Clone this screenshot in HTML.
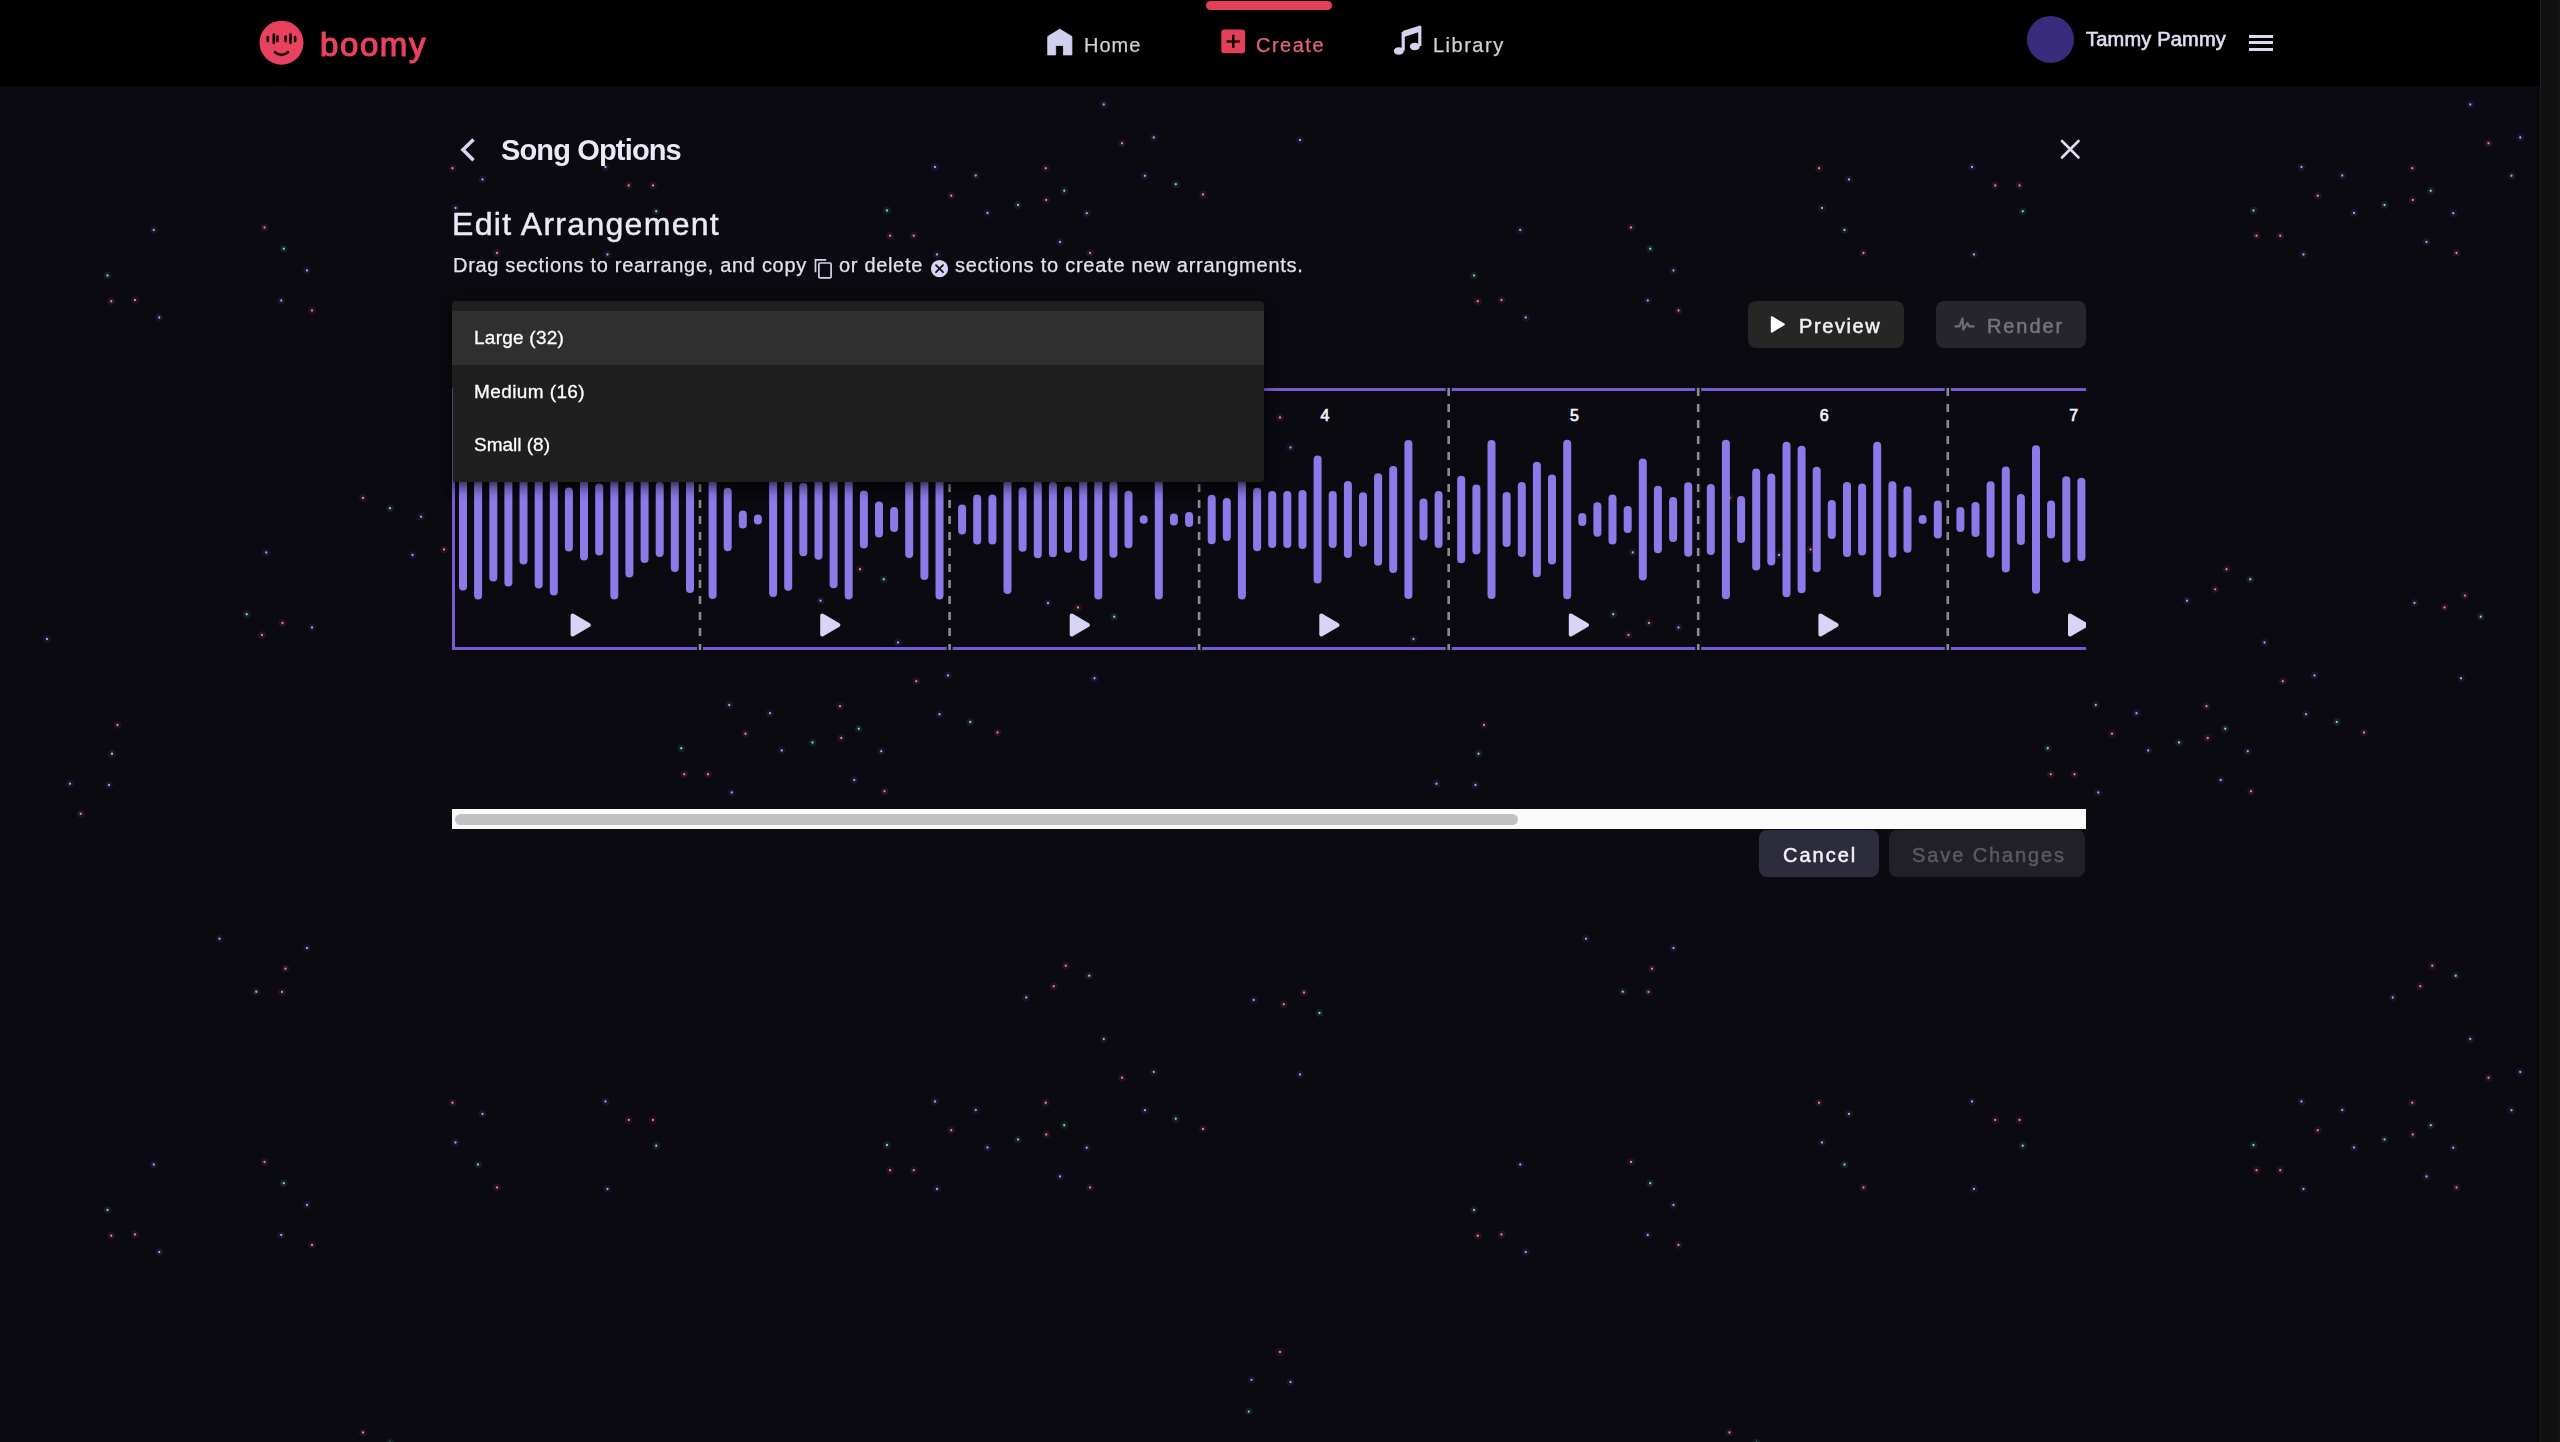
<!DOCTYPE html>
<html><head><meta charset="utf-8">
<style>
html,body{margin:0;padding:0;}
body{width:2560px;height:1442px;overflow:hidden;background:#0b0a11;position:relative;font-family:"Liberation Sans",sans-serif;}
.abs{position:absolute;}
#hdr{left:0;top:0;width:2540px;height:86px;background:#000;}
#sb{left:2540px;top:0;width:20px;height:1442px;background:#111111;border-left:1px solid #1d1d1f;border-right:2px solid #161616;box-sizing:border-box;}
#sbl{left:2537px;top:86px;width:1px;height:1356px;background:#060609;}
.txt{white-space:nowrap;line-height:1;will-change:transform;}
</style></head>
<body>
<svg class="abs" style="left:0;top:0;" width="2538" height="1442" viewBox="0 0 2538 1442">
<g fill="#c2365a" opacity="0.16"><circle cx="264.50" cy="227.50" r="3.8"/><circle cx="264.50" cy="1162.00" r="3.8"/><circle cx="1631.00" cy="227.50" r="3.8"/><circle cx="1631.00" cy="1162.00" r="3.8"/><circle cx="111.25" cy="301.25" r="3.8"/><circle cx="111.25" cy="1235.75" r="3.8"/><circle cx="1477.75" cy="301.25" r="3.8"/><circle cx="1477.75" cy="1235.75" r="3.8"/><circle cx="135.00" cy="300.00" r="3.8"/><circle cx="135.00" cy="1234.50" r="3.8"/><circle cx="1501.50" cy="300.00" r="3.8"/><circle cx="1501.50" cy="1234.50" r="3.8"/><circle cx="312.00" cy="310.50" r="3.8"/><circle cx="312.00" cy="1245.00" r="3.8"/><circle cx="1678.50" cy="310.50" r="3.8"/><circle cx="1678.50" cy="1245.00" r="3.8"/><circle cx="452.50" cy="168.25" r="3.8"/><circle cx="452.50" cy="1102.75" r="3.8"/><circle cx="1819.00" cy="168.25" r="3.8"/><circle cx="1819.00" cy="1102.75" r="3.8"/><circle cx="628.75" cy="185.50" r="3.8"/><circle cx="628.75" cy="1120.00" r="3.8"/><circle cx="1995.25" cy="185.50" r="3.8"/><circle cx="1995.25" cy="1120.00" r="3.8"/><circle cx="497.00" cy="253.00" r="3.8"/><circle cx="497.00" cy="1187.50" r="3.8"/><circle cx="1863.50" cy="253.00" r="3.8"/><circle cx="1863.50" cy="1187.50" r="3.8"/><circle cx="653.00" cy="185.50" r="3.8"/><circle cx="653.00" cy="1120.00" r="3.8"/><circle cx="2019.50" cy="185.50" r="3.8"/><circle cx="2019.50" cy="1120.00" r="3.8"/><circle cx="1122.00" cy="143.25" r="3.8"/><circle cx="1122.00" cy="1077.75" r="3.8"/><circle cx="2488.50" cy="143.25" r="3.8"/><circle cx="2488.50" cy="1077.75" r="3.8"/><circle cx="1045.75" cy="168.25" r="3.8"/><circle cx="1045.75" cy="1102.75" r="3.8"/><circle cx="2412.25" cy="168.25" r="3.8"/><circle cx="2412.25" cy="1102.75" r="3.8"/><circle cx="1203.00" cy="194.50" r="3.8"/><circle cx="1203.00" cy="1129.00" r="3.8"/><circle cx="951.25" cy="195.75" r="3.8"/><circle cx="951.25" cy="1130.25" r="3.8"/><circle cx="2317.75" cy="195.75" r="3.8"/><circle cx="2317.75" cy="1130.25" r="3.8"/><circle cx="1046.25" cy="200.00" r="3.8"/><circle cx="1046.25" cy="1134.50" r="3.8"/><circle cx="2412.75" cy="200.00" r="3.8"/><circle cx="2412.75" cy="1134.50" r="3.8"/><circle cx="890.00" cy="235.75" r="3.8"/><circle cx="890.00" cy="1170.25" r="3.8"/><circle cx="2256.50" cy="235.75" r="3.8"/><circle cx="2256.50" cy="1170.25" r="3.8"/><circle cx="913.75" cy="235.75" r="3.8"/><circle cx="913.75" cy="1170.25" r="3.8"/><circle cx="2280.25" cy="235.75" r="3.8"/><circle cx="2280.25" cy="1170.25" r="3.8"/><circle cx="1090.00" cy="253.00" r="3.8"/><circle cx="1090.00" cy="1187.50" r="3.8"/><circle cx="2456.50" cy="253.00" r="3.8"/><circle cx="2456.50" cy="1187.50" r="3.8"/><circle cx="1280.00" cy="417.50" r="3.8"/><circle cx="1280.00" cy="1352.00" r="3.8"/><circle cx="363.00" cy="498.00" r="3.8"/><circle cx="363.00" cy="1432.50" r="3.8"/><circle cx="1729.50" cy="498.00" r="3.8"/><circle cx="1729.50" cy="1432.50" r="3.8"/><circle cx="444.00" cy="549.50" r="3.8"/><circle cx="1810.50" cy="549.50" r="3.8"/><circle cx="282.50" cy="623.00" r="3.8"/><circle cx="1649.00" cy="623.00" r="3.8"/><circle cx="262.00" cy="635.00" r="3.8"/><circle cx="1628.50" cy="635.00" r="3.8"/><circle cx="117.50" cy="725.00" r="3.8"/><circle cx="1484.00" cy="725.00" r="3.8"/><circle cx="860.00" cy="569.25" r="3.8"/><circle cx="2226.50" cy="569.25" r="3.8"/><circle cx="1078.00" cy="607.50" r="3.8"/><circle cx="2444.50" cy="607.50" r="3.8"/><circle cx="916.25" cy="681.25" r="3.8"/><circle cx="2282.75" cy="681.25" r="3.8"/><circle cx="840.00" cy="706.25" r="3.8"/><circle cx="2206.50" cy="706.25" r="3.8"/><circle cx="997.50" cy="732.50" r="3.8"/><circle cx="2364.00" cy="732.50" r="3.8"/><circle cx="745.50" cy="733.75" r="3.8"/><circle cx="2112.00" cy="733.75" r="3.8"/><circle cx="841.25" cy="738.00" r="3.8"/><circle cx="2207.75" cy="738.00" r="3.8"/><circle cx="684.25" cy="774.25" r="3.8"/><circle cx="2050.75" cy="774.25" r="3.8"/><circle cx="708.00" cy="774.25" r="3.8"/><circle cx="2074.50" cy="774.25" r="3.8"/><circle cx="884.50" cy="791.25" r="3.8"/><circle cx="2251.00" cy="791.25" r="3.8"/><circle cx="80.75" cy="813.75" r="3.8"/><circle cx="1447.25" cy="813.75" r="3.8"/><circle cx="285.50" cy="968.75" r="3.8"/><circle cx="1652.00" cy="968.75" r="3.8"/><circle cx="282.00" cy="992.00" r="3.8"/><circle cx="1648.50" cy="992.00" r="3.8"/><circle cx="1065.75" cy="965.75" r="3.8"/><circle cx="2432.25" cy="965.75" r="3.8"/><circle cx="1053.75" cy="986.25" r="3.8"/><circle cx="2420.25" cy="986.25" r="3.8"/><circle cx="1304.00" cy="992.50" r="3.8"/><circle cx="1283.75" cy="1004.25" r="3.8"/><circle cx="848.70" cy="589.30" r="3.8"/><circle cx="2215.20" cy="589.30" r="3.8"/><circle cx="1098.50" cy="595.60" r="3.8"/><circle cx="2465.00" cy="595.60" r="3.8"/></g>
<g fill="#c8909e"><circle cx="264.50" cy="227.50" r="1.15"/><circle cx="264.50" cy="1162.00" r="1.15"/><circle cx="1631.00" cy="227.50" r="1.15"/><circle cx="1631.00" cy="1162.00" r="1.15"/><circle cx="111.25" cy="301.25" r="1.15"/><circle cx="111.25" cy="1235.75" r="1.15"/><circle cx="1477.75" cy="301.25" r="1.15"/><circle cx="1477.75" cy="1235.75" r="1.15"/><circle cx="135.00" cy="300.00" r="1.15"/><circle cx="135.00" cy="1234.50" r="1.15"/><circle cx="1501.50" cy="300.00" r="1.15"/><circle cx="1501.50" cy="1234.50" r="1.15"/><circle cx="312.00" cy="310.50" r="1.15"/><circle cx="312.00" cy="1245.00" r="1.15"/><circle cx="1678.50" cy="310.50" r="1.15"/><circle cx="1678.50" cy="1245.00" r="1.15"/><circle cx="452.50" cy="168.25" r="1.15"/><circle cx="452.50" cy="1102.75" r="1.15"/><circle cx="1819.00" cy="168.25" r="1.15"/><circle cx="1819.00" cy="1102.75" r="1.15"/><circle cx="628.75" cy="185.50" r="1.15"/><circle cx="628.75" cy="1120.00" r="1.15"/><circle cx="1995.25" cy="185.50" r="1.15"/><circle cx="1995.25" cy="1120.00" r="1.15"/><circle cx="497.00" cy="253.00" r="1.15"/><circle cx="497.00" cy="1187.50" r="1.15"/><circle cx="1863.50" cy="253.00" r="1.15"/><circle cx="1863.50" cy="1187.50" r="1.15"/><circle cx="653.00" cy="185.50" r="1.15"/><circle cx="653.00" cy="1120.00" r="1.15"/><circle cx="2019.50" cy="185.50" r="1.15"/><circle cx="2019.50" cy="1120.00" r="1.15"/><circle cx="1122.00" cy="143.25" r="1.15"/><circle cx="1122.00" cy="1077.75" r="1.15"/><circle cx="2488.50" cy="143.25" r="1.15"/><circle cx="2488.50" cy="1077.75" r="1.15"/><circle cx="1045.75" cy="168.25" r="1.15"/><circle cx="1045.75" cy="1102.75" r="1.15"/><circle cx="2412.25" cy="168.25" r="1.15"/><circle cx="2412.25" cy="1102.75" r="1.15"/><circle cx="1203.00" cy="194.50" r="1.15"/><circle cx="1203.00" cy="1129.00" r="1.15"/><circle cx="951.25" cy="195.75" r="1.15"/><circle cx="951.25" cy="1130.25" r="1.15"/><circle cx="2317.75" cy="195.75" r="1.15"/><circle cx="2317.75" cy="1130.25" r="1.15"/><circle cx="1046.25" cy="200.00" r="1.15"/><circle cx="1046.25" cy="1134.50" r="1.15"/><circle cx="2412.75" cy="200.00" r="1.15"/><circle cx="2412.75" cy="1134.50" r="1.15"/><circle cx="890.00" cy="235.75" r="1.15"/><circle cx="890.00" cy="1170.25" r="1.15"/><circle cx="2256.50" cy="235.75" r="1.15"/><circle cx="2256.50" cy="1170.25" r="1.15"/><circle cx="913.75" cy="235.75" r="1.15"/><circle cx="913.75" cy="1170.25" r="1.15"/><circle cx="2280.25" cy="235.75" r="1.15"/><circle cx="2280.25" cy="1170.25" r="1.15"/><circle cx="1090.00" cy="253.00" r="1.15"/><circle cx="1090.00" cy="1187.50" r="1.15"/><circle cx="2456.50" cy="253.00" r="1.15"/><circle cx="2456.50" cy="1187.50" r="1.15"/><circle cx="1280.00" cy="417.50" r="1.15"/><circle cx="1280.00" cy="1352.00" r="1.15"/><circle cx="363.00" cy="498.00" r="1.15"/><circle cx="363.00" cy="1432.50" r="1.15"/><circle cx="1729.50" cy="498.00" r="1.15"/><circle cx="1729.50" cy="1432.50" r="1.15"/><circle cx="444.00" cy="549.50" r="1.15"/><circle cx="1810.50" cy="549.50" r="1.15"/><circle cx="282.50" cy="623.00" r="1.15"/><circle cx="1649.00" cy="623.00" r="1.15"/><circle cx="262.00" cy="635.00" r="1.15"/><circle cx="1628.50" cy="635.00" r="1.15"/><circle cx="117.50" cy="725.00" r="1.15"/><circle cx="1484.00" cy="725.00" r="1.15"/><circle cx="860.00" cy="569.25" r="1.15"/><circle cx="2226.50" cy="569.25" r="1.15"/><circle cx="1078.00" cy="607.50" r="1.15"/><circle cx="2444.50" cy="607.50" r="1.15"/><circle cx="916.25" cy="681.25" r="1.15"/><circle cx="2282.75" cy="681.25" r="1.15"/><circle cx="840.00" cy="706.25" r="1.15"/><circle cx="2206.50" cy="706.25" r="1.15"/><circle cx="997.50" cy="732.50" r="1.15"/><circle cx="2364.00" cy="732.50" r="1.15"/><circle cx="745.50" cy="733.75" r="1.15"/><circle cx="2112.00" cy="733.75" r="1.15"/><circle cx="841.25" cy="738.00" r="1.15"/><circle cx="2207.75" cy="738.00" r="1.15"/><circle cx="684.25" cy="774.25" r="1.15"/><circle cx="2050.75" cy="774.25" r="1.15"/><circle cx="708.00" cy="774.25" r="1.15"/><circle cx="2074.50" cy="774.25" r="1.15"/><circle cx="884.50" cy="791.25" r="1.15"/><circle cx="2251.00" cy="791.25" r="1.15"/><circle cx="80.75" cy="813.75" r="1.15"/><circle cx="1447.25" cy="813.75" r="1.15"/><circle cx="285.50" cy="968.75" r="1.15"/><circle cx="1652.00" cy="968.75" r="1.15"/><circle cx="282.00" cy="992.00" r="1.15"/><circle cx="1648.50" cy="992.00" r="1.15"/><circle cx="1065.75" cy="965.75" r="1.15"/><circle cx="2432.25" cy="965.75" r="1.15"/><circle cx="1053.75" cy="986.25" r="1.15"/><circle cx="2420.25" cy="986.25" r="1.15"/><circle cx="1304.00" cy="992.50" r="1.15"/><circle cx="1283.75" cy="1004.25" r="1.15"/><circle cx="848.70" cy="589.30" r="1.15"/><circle cx="2215.20" cy="589.30" r="1.15"/><circle cx="1098.50" cy="595.60" r="1.15"/><circle cx="2465.00" cy="595.60" r="1.15"/></g>
<g fill="#2f9a72" opacity="0.16"><circle cx="283.75" cy="248.75" r="3.8"/><circle cx="283.75" cy="1183.25" r="3.8"/><circle cx="1650.25" cy="248.75" r="3.8"/><circle cx="1650.25" cy="1183.25" r="3.8"/><circle cx="107.50" cy="275.50" r="3.8"/><circle cx="107.50" cy="1210.00" r="3.8"/><circle cx="1474.00" cy="275.50" r="3.8"/><circle cx="1474.00" cy="1210.00" r="3.8"/><circle cx="478.00" cy="230.00" r="3.8"/><circle cx="478.00" cy="1164.50" r="3.8"/><circle cx="1844.50" cy="230.00" r="3.8"/><circle cx="1844.50" cy="1164.50" r="3.8"/><circle cx="656.25" cy="211.25" r="3.8"/><circle cx="656.25" cy="1145.75" r="3.8"/><circle cx="2022.75" cy="211.25" r="3.8"/><circle cx="2022.75" cy="1145.75" r="3.8"/><circle cx="1175.75" cy="184.25" r="3.8"/><circle cx="1175.75" cy="1118.75" r="3.8"/><circle cx="2542.25" cy="184.25" r="3.8"/><circle cx="2542.25" cy="1118.75" r="3.8"/><circle cx="1064.25" cy="190.75" r="3.8"/><circle cx="1064.25" cy="1125.25" r="3.8"/><circle cx="2430.75" cy="190.75" r="3.8"/><circle cx="2430.75" cy="1125.25" r="3.8"/><circle cx="1018.00" cy="205.00" r="3.8"/><circle cx="1018.00" cy="1139.50" r="3.8"/><circle cx="2384.50" cy="205.00" r="3.8"/><circle cx="2384.50" cy="1139.50" r="3.8"/><circle cx="887.00" cy="210.50" r="3.8"/><circle cx="887.00" cy="1145.00" r="3.8"/><circle cx="2253.50" cy="210.50" r="3.8"/><circle cx="2253.50" cy="1145.00" r="3.8"/><circle cx="390.00" cy="508.25" r="3.8"/><circle cx="390.00" cy="1442.75" r="3.8"/><circle cx="1756.50" cy="508.25" r="3.8"/><circle cx="1756.50" cy="1442.75" r="3.8"/><circle cx="246.75" cy="614.25" r="3.8"/><circle cx="1613.25" cy="614.25" r="3.8"/><circle cx="112.00" cy="753.75" r="3.8"/><circle cx="1478.50" cy="753.75" r="3.8"/><circle cx="883.75" cy="579.25" r="3.8"/><circle cx="2250.25" cy="579.25" r="3.8"/><circle cx="1114.25" cy="616.75" r="3.8"/><circle cx="2480.75" cy="616.75" r="3.8"/><circle cx="970.25" cy="722.00" r="3.8"/><circle cx="2336.75" cy="722.00" r="3.8"/><circle cx="858.75" cy="728.75" r="3.8"/><circle cx="2225.25" cy="728.75" r="3.8"/><circle cx="812.50" cy="742.50" r="3.8"/><circle cx="2179.00" cy="742.50" r="3.8"/><circle cx="681.25" cy="748.25" r="3.8"/><circle cx="2047.75" cy="748.25" r="3.8"/><circle cx="256.25" cy="991.75" r="3.8"/><circle cx="1622.75" cy="991.75" r="3.8"/><circle cx="1089.25" cy="975.75" r="3.8"/><circle cx="2455.75" cy="975.75" r="3.8"/><circle cx="1319.50" cy="1013.00" r="3.8"/><circle cx="1248.80" cy="477.10" r="3.8"/><circle cx="1248.80" cy="1411.60" r="3.8"/></g>
<g fill="#a3c4b4"><circle cx="283.75" cy="248.75" r="1.15"/><circle cx="283.75" cy="1183.25" r="1.15"/><circle cx="1650.25" cy="248.75" r="1.15"/><circle cx="1650.25" cy="1183.25" r="1.15"/><circle cx="107.50" cy="275.50" r="1.15"/><circle cx="107.50" cy="1210.00" r="1.15"/><circle cx="1474.00" cy="275.50" r="1.15"/><circle cx="1474.00" cy="1210.00" r="1.15"/><circle cx="478.00" cy="230.00" r="1.15"/><circle cx="478.00" cy="1164.50" r="1.15"/><circle cx="1844.50" cy="230.00" r="1.15"/><circle cx="1844.50" cy="1164.50" r="1.15"/><circle cx="656.25" cy="211.25" r="1.15"/><circle cx="656.25" cy="1145.75" r="1.15"/><circle cx="2022.75" cy="211.25" r="1.15"/><circle cx="2022.75" cy="1145.75" r="1.15"/><circle cx="1175.75" cy="184.25" r="1.15"/><circle cx="1175.75" cy="1118.75" r="1.15"/><circle cx="2542.25" cy="184.25" r="1.15"/><circle cx="2542.25" cy="1118.75" r="1.15"/><circle cx="1064.25" cy="190.75" r="1.15"/><circle cx="1064.25" cy="1125.25" r="1.15"/><circle cx="2430.75" cy="190.75" r="1.15"/><circle cx="2430.75" cy="1125.25" r="1.15"/><circle cx="1018.00" cy="205.00" r="1.15"/><circle cx="1018.00" cy="1139.50" r="1.15"/><circle cx="2384.50" cy="205.00" r="1.15"/><circle cx="2384.50" cy="1139.50" r="1.15"/><circle cx="887.00" cy="210.50" r="1.15"/><circle cx="887.00" cy="1145.00" r="1.15"/><circle cx="2253.50" cy="210.50" r="1.15"/><circle cx="2253.50" cy="1145.00" r="1.15"/><circle cx="390.00" cy="508.25" r="1.15"/><circle cx="390.00" cy="1442.75" r="1.15"/><circle cx="1756.50" cy="508.25" r="1.15"/><circle cx="1756.50" cy="1442.75" r="1.15"/><circle cx="246.75" cy="614.25" r="1.15"/><circle cx="1613.25" cy="614.25" r="1.15"/><circle cx="112.00" cy="753.75" r="1.15"/><circle cx="1478.50" cy="753.75" r="1.15"/><circle cx="883.75" cy="579.25" r="1.15"/><circle cx="2250.25" cy="579.25" r="1.15"/><circle cx="1114.25" cy="616.75" r="1.15"/><circle cx="2480.75" cy="616.75" r="1.15"/><circle cx="970.25" cy="722.00" r="1.15"/><circle cx="2336.75" cy="722.00" r="1.15"/><circle cx="858.75" cy="728.75" r="1.15"/><circle cx="2225.25" cy="728.75" r="1.15"/><circle cx="812.50" cy="742.50" r="1.15"/><circle cx="2179.00" cy="742.50" r="1.15"/><circle cx="681.25" cy="748.25" r="1.15"/><circle cx="2047.75" cy="748.25" r="1.15"/><circle cx="256.25" cy="991.75" r="1.15"/><circle cx="1622.75" cy="991.75" r="1.15"/><circle cx="1089.25" cy="975.75" r="1.15"/><circle cx="2455.75" cy="975.75" r="1.15"/><circle cx="1319.50" cy="1013.00" r="1.15"/><circle cx="1248.80" cy="477.10" r="1.15"/><circle cx="1248.80" cy="1411.60" r="1.15"/></g>
<g fill="#5550c0" opacity="0.16"><circle cx="153.75" cy="230.00" r="3.8"/><circle cx="153.75" cy="1164.50" r="3.8"/><circle cx="1520.25" cy="230.00" r="3.8"/><circle cx="1520.25" cy="1164.50" r="3.8"/><circle cx="307.00" cy="270.50" r="3.8"/><circle cx="307.00" cy="1205.00" r="3.8"/><circle cx="1673.50" cy="270.50" r="3.8"/><circle cx="1673.50" cy="1205.00" r="3.8"/><circle cx="281.25" cy="300.50" r="3.8"/><circle cx="281.25" cy="1235.00" r="3.8"/><circle cx="1647.75" cy="300.50" r="3.8"/><circle cx="1647.75" cy="1235.00" r="3.8"/><circle cx="159.25" cy="317.50" r="3.8"/><circle cx="159.25" cy="1252.00" r="3.8"/><circle cx="1525.75" cy="317.50" r="3.8"/><circle cx="1525.75" cy="1252.00" r="3.8"/><circle cx="482.50" cy="179.50" r="3.8"/><circle cx="482.50" cy="1114.00" r="3.8"/><circle cx="1849.00" cy="179.50" r="3.8"/><circle cx="1849.00" cy="1114.00" r="3.8"/><circle cx="605.50" cy="167.00" r="3.8"/><circle cx="605.50" cy="1101.50" r="3.8"/><circle cx="1972.00" cy="167.00" r="3.8"/><circle cx="1972.00" cy="1101.50" r="3.8"/><circle cx="455.50" cy="208.00" r="3.8"/><circle cx="455.50" cy="1142.50" r="3.8"/><circle cx="1822.00" cy="208.00" r="3.8"/><circle cx="1822.00" cy="1142.50" r="3.8"/><circle cx="607.50" cy="254.50" r="3.8"/><circle cx="607.50" cy="1189.00" r="3.8"/><circle cx="1974.00" cy="254.50" r="3.8"/><circle cx="1974.00" cy="1189.00" r="3.8"/><circle cx="1103.75" cy="104.50" r="3.8"/><circle cx="1103.75" cy="1039.00" r="3.8"/><circle cx="2470.25" cy="104.50" r="3.8"/><circle cx="2470.25" cy="1039.00" r="3.8"/><circle cx="1153.75" cy="137.50" r="3.8"/><circle cx="1153.75" cy="1072.00" r="3.8"/><circle cx="2520.25" cy="137.50" r="3.8"/><circle cx="2520.25" cy="1072.00" r="3.8"/><circle cx="935.00" cy="167.00" r="3.8"/><circle cx="935.00" cy="1101.50" r="3.8"/><circle cx="2301.50" cy="167.00" r="3.8"/><circle cx="2301.50" cy="1101.50" r="3.8"/><circle cx="975.75" cy="175.50" r="3.8"/><circle cx="975.75" cy="1110.00" r="3.8"/><circle cx="2342.25" cy="175.50" r="3.8"/><circle cx="2342.25" cy="1110.00" r="3.8"/><circle cx="1145.00" cy="175.75" r="3.8"/><circle cx="1145.00" cy="1110.25" r="3.8"/><circle cx="2511.50" cy="175.75" r="3.8"/><circle cx="2511.50" cy="1110.25" r="3.8"/><circle cx="987.50" cy="213.00" r="3.8"/><circle cx="987.50" cy="1147.50" r="3.8"/><circle cx="2354.00" cy="213.00" r="3.8"/><circle cx="2354.00" cy="1147.50" r="3.8"/><circle cx="1086.75" cy="213.25" r="3.8"/><circle cx="1086.75" cy="1147.75" r="3.8"/><circle cx="2453.25" cy="213.25" r="3.8"/><circle cx="2453.25" cy="1147.75" r="3.8"/><circle cx="1060.00" cy="242.00" r="3.8"/><circle cx="1060.00" cy="1176.50" r="3.8"/><circle cx="2426.50" cy="242.00" r="3.8"/><circle cx="2426.50" cy="1176.50" r="3.8"/><circle cx="937.00" cy="254.50" r="3.8"/><circle cx="937.00" cy="1189.00" r="3.8"/><circle cx="2303.50" cy="254.50" r="3.8"/><circle cx="2303.50" cy="1189.00" r="3.8"/><circle cx="1300.00" cy="140.00" r="3.8"/><circle cx="1300.00" cy="1074.50" r="3.8"/><circle cx="421.00" cy="516.75" r="3.8"/><circle cx="1787.50" cy="516.75" r="3.8"/><circle cx="266.25" cy="552.50" r="3.8"/><circle cx="1632.75" cy="552.50" r="3.8"/><circle cx="412.50" cy="555.00" r="3.8"/><circle cx="1779.00" cy="555.00" r="3.8"/><circle cx="312.00" cy="627.50" r="3.8"/><circle cx="1678.50" cy="627.50" r="3.8"/><circle cx="47.00" cy="639.00" r="3.8"/><circle cx="1413.50" cy="639.00" r="3.8"/><circle cx="70.00" cy="783.75" r="3.8"/><circle cx="1436.50" cy="783.75" r="3.8"/><circle cx="109.00" cy="785.00" r="3.8"/><circle cx="1475.50" cy="785.00" r="3.8"/><circle cx="820.50" cy="600.75" r="3.8"/><circle cx="2187.00" cy="600.75" r="3.8"/><circle cx="898.00" cy="642.50" r="3.8"/><circle cx="2264.50" cy="642.50" r="3.8"/><circle cx="1048.00" cy="603.00" r="3.8"/><circle cx="2414.50" cy="603.00" r="3.8"/><circle cx="948.00" cy="675.50" r="3.8"/><circle cx="2314.50" cy="675.50" r="3.8"/><circle cx="1094.50" cy="678.25" r="3.8"/><circle cx="2461.00" cy="678.25" r="3.8"/><circle cx="729.25" cy="705.00" r="3.8"/><circle cx="2095.75" cy="705.00" r="3.8"/><circle cx="770.00" cy="713.25" r="3.8"/><circle cx="2136.50" cy="713.25" r="3.8"/><circle cx="939.50" cy="714.25" r="3.8"/><circle cx="2306.00" cy="714.25" r="3.8"/><circle cx="781.75" cy="750.50" r="3.8"/><circle cx="2148.25" cy="750.50" r="3.8"/><circle cx="881.25" cy="751.25" r="3.8"/><circle cx="2247.75" cy="751.25" r="3.8"/><circle cx="854.25" cy="780.00" r="3.8"/><circle cx="2220.75" cy="780.00" r="3.8"/><circle cx="731.75" cy="792.50" r="3.8"/><circle cx="2098.25" cy="792.50" r="3.8"/><circle cx="1290.50" cy="447.50" r="3.8"/><circle cx="1290.50" cy="1382.00" r="3.8"/><circle cx="219.50" cy="938.75" r="3.8"/><circle cx="1586.00" cy="938.75" r="3.8"/><circle cx="307.00" cy="948.00" r="3.8"/><circle cx="1673.50" cy="948.00" r="3.8"/><circle cx="1026.25" cy="997.50" r="3.8"/><circle cx="2392.75" cy="997.50" r="3.8"/><circle cx="1253.75" cy="1000.00" r="3.8"/><circle cx="1251.50" cy="445.30" r="3.8"/><circle cx="1251.50" cy="1379.80" r="3.8"/></g>
<g fill="#a9a7c8"><circle cx="153.75" cy="230.00" r="1.15"/><circle cx="153.75" cy="1164.50" r="1.15"/><circle cx="1520.25" cy="230.00" r="1.15"/><circle cx="1520.25" cy="1164.50" r="1.15"/><circle cx="307.00" cy="270.50" r="1.15"/><circle cx="307.00" cy="1205.00" r="1.15"/><circle cx="1673.50" cy="270.50" r="1.15"/><circle cx="1673.50" cy="1205.00" r="1.15"/><circle cx="281.25" cy="300.50" r="1.15"/><circle cx="281.25" cy="1235.00" r="1.15"/><circle cx="1647.75" cy="300.50" r="1.15"/><circle cx="1647.75" cy="1235.00" r="1.15"/><circle cx="159.25" cy="317.50" r="1.15"/><circle cx="159.25" cy="1252.00" r="1.15"/><circle cx="1525.75" cy="317.50" r="1.15"/><circle cx="1525.75" cy="1252.00" r="1.15"/><circle cx="482.50" cy="179.50" r="1.15"/><circle cx="482.50" cy="1114.00" r="1.15"/><circle cx="1849.00" cy="179.50" r="1.15"/><circle cx="1849.00" cy="1114.00" r="1.15"/><circle cx="605.50" cy="167.00" r="1.15"/><circle cx="605.50" cy="1101.50" r="1.15"/><circle cx="1972.00" cy="167.00" r="1.15"/><circle cx="1972.00" cy="1101.50" r="1.15"/><circle cx="455.50" cy="208.00" r="1.15"/><circle cx="455.50" cy="1142.50" r="1.15"/><circle cx="1822.00" cy="208.00" r="1.15"/><circle cx="1822.00" cy="1142.50" r="1.15"/><circle cx="607.50" cy="254.50" r="1.15"/><circle cx="607.50" cy="1189.00" r="1.15"/><circle cx="1974.00" cy="254.50" r="1.15"/><circle cx="1974.00" cy="1189.00" r="1.15"/><circle cx="1103.75" cy="104.50" r="1.15"/><circle cx="1103.75" cy="1039.00" r="1.15"/><circle cx="2470.25" cy="104.50" r="1.15"/><circle cx="2470.25" cy="1039.00" r="1.15"/><circle cx="1153.75" cy="137.50" r="1.15"/><circle cx="1153.75" cy="1072.00" r="1.15"/><circle cx="2520.25" cy="137.50" r="1.15"/><circle cx="2520.25" cy="1072.00" r="1.15"/><circle cx="935.00" cy="167.00" r="1.15"/><circle cx="935.00" cy="1101.50" r="1.15"/><circle cx="2301.50" cy="167.00" r="1.15"/><circle cx="2301.50" cy="1101.50" r="1.15"/><circle cx="975.75" cy="175.50" r="1.15"/><circle cx="975.75" cy="1110.00" r="1.15"/><circle cx="2342.25" cy="175.50" r="1.15"/><circle cx="2342.25" cy="1110.00" r="1.15"/><circle cx="1145.00" cy="175.75" r="1.15"/><circle cx="1145.00" cy="1110.25" r="1.15"/><circle cx="2511.50" cy="175.75" r="1.15"/><circle cx="2511.50" cy="1110.25" r="1.15"/><circle cx="987.50" cy="213.00" r="1.15"/><circle cx="987.50" cy="1147.50" r="1.15"/><circle cx="2354.00" cy="213.00" r="1.15"/><circle cx="2354.00" cy="1147.50" r="1.15"/><circle cx="1086.75" cy="213.25" r="1.15"/><circle cx="1086.75" cy="1147.75" r="1.15"/><circle cx="2453.25" cy="213.25" r="1.15"/><circle cx="2453.25" cy="1147.75" r="1.15"/><circle cx="1060.00" cy="242.00" r="1.15"/><circle cx="1060.00" cy="1176.50" r="1.15"/><circle cx="2426.50" cy="242.00" r="1.15"/><circle cx="2426.50" cy="1176.50" r="1.15"/><circle cx="937.00" cy="254.50" r="1.15"/><circle cx="937.00" cy="1189.00" r="1.15"/><circle cx="2303.50" cy="254.50" r="1.15"/><circle cx="2303.50" cy="1189.00" r="1.15"/><circle cx="1300.00" cy="140.00" r="1.15"/><circle cx="1300.00" cy="1074.50" r="1.15"/><circle cx="421.00" cy="516.75" r="1.15"/><circle cx="1787.50" cy="516.75" r="1.15"/><circle cx="266.25" cy="552.50" r="1.15"/><circle cx="1632.75" cy="552.50" r="1.15"/><circle cx="412.50" cy="555.00" r="1.15"/><circle cx="1779.00" cy="555.00" r="1.15"/><circle cx="312.00" cy="627.50" r="1.15"/><circle cx="1678.50" cy="627.50" r="1.15"/><circle cx="47.00" cy="639.00" r="1.15"/><circle cx="1413.50" cy="639.00" r="1.15"/><circle cx="70.00" cy="783.75" r="1.15"/><circle cx="1436.50" cy="783.75" r="1.15"/><circle cx="109.00" cy="785.00" r="1.15"/><circle cx="1475.50" cy="785.00" r="1.15"/><circle cx="820.50" cy="600.75" r="1.15"/><circle cx="2187.00" cy="600.75" r="1.15"/><circle cx="898.00" cy="642.50" r="1.15"/><circle cx="2264.50" cy="642.50" r="1.15"/><circle cx="1048.00" cy="603.00" r="1.15"/><circle cx="2414.50" cy="603.00" r="1.15"/><circle cx="948.00" cy="675.50" r="1.15"/><circle cx="2314.50" cy="675.50" r="1.15"/><circle cx="1094.50" cy="678.25" r="1.15"/><circle cx="2461.00" cy="678.25" r="1.15"/><circle cx="729.25" cy="705.00" r="1.15"/><circle cx="2095.75" cy="705.00" r="1.15"/><circle cx="770.00" cy="713.25" r="1.15"/><circle cx="2136.50" cy="713.25" r="1.15"/><circle cx="939.50" cy="714.25" r="1.15"/><circle cx="2306.00" cy="714.25" r="1.15"/><circle cx="781.75" cy="750.50" r="1.15"/><circle cx="2148.25" cy="750.50" r="1.15"/><circle cx="881.25" cy="751.25" r="1.15"/><circle cx="2247.75" cy="751.25" r="1.15"/><circle cx="854.25" cy="780.00" r="1.15"/><circle cx="2220.75" cy="780.00" r="1.15"/><circle cx="731.75" cy="792.50" r="1.15"/><circle cx="2098.25" cy="792.50" r="1.15"/><circle cx="1290.50" cy="447.50" r="1.15"/><circle cx="1290.50" cy="1382.00" r="1.15"/><circle cx="219.50" cy="938.75" r="1.15"/><circle cx="1586.00" cy="938.75" r="1.15"/><circle cx="307.00" cy="948.00" r="1.15"/><circle cx="1673.50" cy="948.00" r="1.15"/><circle cx="1026.25" cy="997.50" r="1.15"/><circle cx="2392.75" cy="997.50" r="1.15"/><circle cx="1253.75" cy="1000.00" r="1.15"/><circle cx="1251.50" cy="445.30" r="1.15"/><circle cx="1251.50" cy="1379.80" r="1.15"/></g>
</svg>
<div id="hdr" class="abs"></div>
<div id="sb" class="abs"></div>
<div id="sbl" class="abs"></div>

<!-- logo -->
<svg class="abs" style="left:258px;top:19px;" width="48" height="48" viewBox="0 0 48 48">
<circle cx="23.5" cy="23.7" r="22" fill="#e8425e"/>
<g stroke="#1a0508" stroke-width="2.7" stroke-linecap="round">
<line x1="9.8" y1="18" x2="9.8" y2="22"/>
<line x1="15.8" y1="15.5" x2="15.8" y2="23.8"/>
<line x1="19.5" y1="17.5" x2="19.5" y2="22"/>
<line x1="27.6" y1="17.5" x2="27.6" y2="22"/>
<line x1="32.5" y1="15.5" x2="32.5" y2="23.8"/>
<line x1="37.1" y1="18" x2="37.1" y2="22"/>
</g>
<path d="M17 33.2 Q23.5 38.5 30 33.2" fill="none" stroke="#1a0508" stroke-width="2.6" stroke-linecap="round"/>
</svg>
<div class="abs txt" style="left:320px;top:28px;font-size:33px;letter-spacing:1.6px;color:#e8425e;-webkit-text-stroke:1.2px #e8425e;">boomy</div>

<!-- nav -->
<div class="abs" style="left:1206px;top:1px;width:126px;height:9px;border-radius:5px;background:#e5405a;"></div>
<svg class="abs" style="left:1046px;top:28px;" width="28" height="28" viewBox="0 0 28 28">
<path d="M1.7 8.6 L13.8 1.1 L25.9 8.6 L25.9 26.9 L17.4 26.9 L17.4 17.5 L9.7 17.5 L9.7 26.9 L1.7 26.9 Z" fill="#cfd0ee" stroke="#cfd0ee" stroke-width="0.8" stroke-linejoin="round"/>
</svg>
<div class="abs txt" style="left:1084px;top:35px;font-size:20px;letter-spacing:1px;color:#cfcfd4;-webkit-text-stroke:0.25px #cfcfd4;">Home</div>
<svg class="abs" style="left:1220px;top:28px;" width="28" height="28" viewBox="0 0 28 28">
<rect x="1.3" y="1.5" width="23.8" height="23.8" rx="3" fill="#e5405a"/>
<rect x="6.5" y="12.3" width="13.4" height="2.4" fill="#140306"/>
<rect x="12" y="6.7" width="2.5" height="13.2" fill="#140306"/>
</svg>
<div class="abs txt" style="left:1256px;top:35px;font-size:20px;letter-spacing:1.5px;color:#e2647d;-webkit-text-stroke:0.25px #e2647d;">Create</div>
<svg class="abs" style="left:1392px;top:24px;" width="32" height="32" viewBox="0 0 32 32">
<path d="M11.2 8.6 L27.8 3.2 L27.8 22" fill="none" stroke="#d6d3f2" stroke-width="3.2" stroke-linejoin="round"/>
<path d="M11.2 8.6 L27.8 3.2 L27.8 7.8 L11.2 13.2 Z" fill="#d6d3f2"/>
<line x1="11.2" y1="8" x2="11.2" y2="26.5" stroke="#d6d3f2" stroke-width="3.2"/>
<ellipse cx="6.8" cy="27" rx="5" ry="3.8" fill="#d6d3f2"/>
<ellipse cx="22.8" cy="22.5" rx="5" ry="3.8" fill="#d6d3f2"/>
</svg>
<div class="abs txt" style="left:1433px;top:35px;font-size:20px;letter-spacing:1.5px;color:#cfcfd4;-webkit-text-stroke:0.25px #cfcfd4;">Library</div>

<!-- user -->
<div class="abs" style="left:2027px;top:16px;width:47px;height:47px;border-radius:50%;background:#3a2c7c;"></div>
<div class="abs txt" style="left:2086px;top:29px;font-size:20px;letter-spacing:0.2px;color:#e2def2;-webkit-text-stroke:0.6px #e2def2;">Tammy Pammy</div>
<div class="abs" style="left:2249px;top:35px;width:24px;height:3px;background:#dcd8f0;"></div>
<div class="abs" style="left:2249px;top:41px;width:24px;height:3px;background:#dcd8f0;"></div>
<div class="abs" style="left:2249px;top:48px;width:24px;height:3px;background:#dcd8f0;"></div>

<!-- song options -->
<svg class="abs" style="left:456px;top:134px;" width="24" height="32" viewBox="0 0 24 32">
<path d="M17.5 5.5 L7 15.8 L17.5 26.2" fill="none" stroke="#d8d5f0" stroke-width="3.6" stroke-linecap="butt" stroke-linejoin="miter"/>
</svg>
<div class="abs txt" style="left:501px;top:136px;font-size:29px;font-weight:bold;letter-spacing:-0.85px;color:#ece9f6;">Song Options</div>
<svg class="abs" style="left:2058px;top:137px;" width="24" height="24" viewBox="0 0 24 24">
<path d="M4 4 L20.5 20.5 M20.5 4 L4 20.5" fill="none" stroke="#dedcef" stroke-width="2.6" stroke-linecap="round"/>
</svg>
<div class="abs txt" style="left:452px;top:208px;font-size:32px;letter-spacing:1.3px;color:#ece9f6;-webkit-text-stroke:0.45px #ece9f6;">Edit Arrangement</div>
<div id="sub1" class="abs txt" style="left:453px;top:255px;font-size:20px;letter-spacing:0.69px;color:#e3e0ee;-webkit-text-stroke:0.25px #e3e0ee;">Drag sections to rearrange, and copy</div>
<svg class="abs" style="left:812px;top:257px;" width="24" height="24" viewBox="0 0 24 24">
<path d="M3.5 15.2 L3.5 2.8 L14.2 2.8" fill="none" stroke="#d6d3ee" stroke-width="1.7"/>
<rect x="6.9" y="6" width="12.2" height="14.9" rx="1.2" fill="none" stroke="#d6d3ee" stroke-width="1.7"/>
</svg>
<div id="sub2" class="abs txt" style="left:839px;top:255px;font-size:20px;letter-spacing:0.68px;color:#e3e0ee;-webkit-text-stroke:0.25px #e3e0ee;">or delete</div>
<svg class="abs" style="left:929px;top:258px;" width="22" height="22" viewBox="0 0 22 22">
<circle cx="10.5" cy="10.7" r="8.6" fill="#d8d5f3"/>
<path d="M7 7.2 L14 14.2 M14 7.2 L7 14.2" stroke="#16141f" stroke-width="1.9" stroke-linecap="round"/>
</svg>
<div id="sub3" class="abs txt" style="left:955px;top:255px;font-size:20px;letter-spacing:0.75px;color:#e3e0ee;-webkit-text-stroke:0.25px #e3e0ee;">sections to create new arrangments.</div>

<!-- buttons -->
<div class="abs" style="left:1748px;top:301px;width:156px;height:47px;border-radius:8px;background:#262626;"></div>
<svg class="abs" style="left:1766px;top:312px;" width="24" height="24" viewBox="0 0 24 24">
<path d="M5.8 5.2 L17.8 12.4 L5.8 19.6 Z" fill="#ffffff" stroke="#ffffff" stroke-width="2" stroke-linejoin="round"/>
</svg>
<div class="abs txt" style="left:1799px;top:316px;font-size:20px;letter-spacing:1.6px;color:#f2f2f2;-webkit-text-stroke:0.5px #f2f2f2;">Preview</div>
<div class="abs" style="left:1936px;top:301px;width:150px;height:47px;border-radius:8px;background:#26252c;"></div>
<svg class="abs" style="left:1952px;top:313px;" width="24" height="22" viewBox="0 0 24 22">
<path d="M3.5 13.4 L7.4 13.4 L10.5 5.3 L11.3 16.7 L15.5 10 L17.4 13.4 L21.6 13.4" fill="none" stroke="#6f6e75" stroke-width="2.1" stroke-linejoin="round" stroke-linecap="round"/>
</svg>
<div class="abs txt" style="left:1987px;top:316px;font-size:20px;letter-spacing:1.9px;color:#75747b;-webkit-text-stroke:0.5px #75747b;">Render</div>

<svg class="abs" style="left:452px;top:388px;" width="1634" height="262" viewBox="0 0 1634 262">
<defs><clipPath id="wc"><rect x="0" y="0" width="1634" height="262"/></clipPath></defs>
<g clip-path="url(#wc)">
<g fill="#8b7ae8"><rect x="7.0" y="60.5" width="8" height="142.0" rx="4"/><rect x="22.1" y="51.5" width="8" height="160.0" rx="4"/><rect x="37.3" y="69.5" width="8" height="124.0" rx="4"/><rect x="52.4" y="64.5" width="8" height="134.0" rx="4"/><rect x="67.5" y="86.5" width="8" height="90.0" rx="4"/><rect x="82.7" y="62.5" width="8" height="138.0" rx="4"/><rect x="97.8" y="55.5" width="8" height="152.0" rx="4"/><rect x="112.9" y="99.5" width="8" height="64.0" rx="4"/><rect x="128.0" y="90.5" width="8" height="82.0" rx="4"/><rect x="143.2" y="95.5" width="8" height="72.0" rx="4"/><rect x="158.3" y="51.5" width="8" height="160.0" rx="4"/><rect x="173.4" y="73.5" width="8" height="116.0" rx="4"/><rect x="188.6" y="88.0" width="8" height="87.0" rx="4"/><rect x="203.7" y="94.1" width="8" height="74.8" rx="4"/><rect x="218.8" y="79.1" width="8" height="104.8" rx="4"/><rect x="234.0" y="58.1" width="8" height="146.8" rx="4"/><rect x="256.6" y="52.1" width="8" height="158.8" rx="4"/><rect x="271.7" y="99.8" width="8" height="63.4" rx="4"/><rect x="286.8" y="122.5" width="8" height="18.0" rx="4"/><rect x="301.9" y="126.5" width="8" height="10.0" rx="4"/><rect x="317.1" y="54.1" width="8" height="154.8" rx="4"/><rect x="332.2" y="60.2" width="8" height="142.6" rx="4"/><rect x="347.3" y="94.7" width="8" height="73.6" rx="4"/><rect x="362.5" y="91.3" width="8" height="80.4" rx="4"/><rect x="377.6" y="62.8" width="8" height="137.4" rx="4"/><rect x="392.7" y="51.5" width="8" height="160.0" rx="4"/><rect x="407.9" y="102.6" width="8" height="57.8" rx="4"/><rect x="423.0" y="113.4" width="8" height="36.2" rx="4"/><rect x="438.1" y="119.1" width="8" height="24.8" rx="4"/><rect x="453.2" y="93.1" width="8" height="76.8" rx="4"/><rect x="468.4" y="71.0" width="8" height="121.0" rx="4"/><rect x="483.5" y="51.5" width="8" height="160.0" rx="4"/><rect x="506.1" y="116.5" width="8" height="30.0" rx="4"/><rect x="521.2" y="106.5" width="8" height="50.0" rx="4"/><rect x="536.4" y="106.5" width="8" height="50.0" rx="4"/><rect x="551.5" y="57.1" width="8" height="148.8" rx="4"/><rect x="566.6" y="99.2" width="8" height="64.6" rx="4"/><rect x="581.8" y="92.7" width="8" height="77.6" rx="4"/><rect x="596.9" y="93.7" width="8" height="75.6" rx="4"/><rect x="612.0" y="98.2" width="8" height="66.6" rx="4"/><rect x="627.2" y="90.0" width="8" height="83.0" rx="4"/><rect x="642.3" y="51.5" width="8" height="160.0" rx="4"/><rect x="657.4" y="93.3" width="8" height="76.4" rx="4"/><rect x="672.5" y="102.7" width="8" height="57.6" rx="4"/><rect x="687.7" y="127.2" width="8" height="8.6" rx="4"/><rect x="702.8" y="51.5" width="8" height="160.0" rx="4"/><rect x="717.9" y="125.5" width="8" height="12.0" rx="4"/><rect x="733.1" y="124.0" width="8" height="15.0" rx="4"/><rect x="755.7" y="106.8" width="8" height="49.4" rx="4"/><rect x="770.8" y="109.9" width="8" height="43.2" rx="4"/><rect x="785.9" y="51.5" width="8" height="160.0" rx="4"/><rect x="801.1" y="99.8" width="8" height="63.4" rx="4"/><rect x="816.2" y="103.1" width="8" height="56.8" rx="4"/><rect x="831.3" y="103.1" width="8" height="56.8" rx="4"/><rect x="846.5" y="102.0" width="8" height="59.0" rx="4"/><rect x="861.6" y="67.5" width="8" height="128.0" rx="4"/><rect x="876.7" y="102.9" width="8" height="57.2" rx="4"/><rect x="891.9" y="93.1" width="8" height="76.8" rx="4"/><rect x="907.0" y="104.3" width="8" height="54.4" rx="4"/><rect x="922.1" y="85.3" width="8" height="92.4" rx="4"/><rect x="937.2" y="77.9" width="8" height="107.2" rx="4"/><rect x="952.4" y="52.0" width="8" height="159.0" rx="4"/><rect x="967.5" y="110.5" width="8" height="42.0" rx="4"/><rect x="982.6" y="102.9" width="8" height="57.2" rx="4"/><rect x="1005.2" y="87.8" width="8" height="87.4" rx="4"/><rect x="1020.4" y="96.6" width="8" height="69.8" rx="4"/><rect x="1035.5" y="51.9" width="8" height="159.2" rx="4"/><rect x="1050.6" y="103.9" width="8" height="55.2" rx="4"/><rect x="1065.8" y="93.9" width="8" height="75.2" rx="4"/><rect x="1080.9" y="73.8" width="8" height="115.4" rx="4"/><rect x="1096.0" y="86.5" width="8" height="90.0" rx="4"/><rect x="1111.2" y="51.7" width="8" height="159.6" rx="4"/><rect x="1126.3" y="125.1" width="8" height="12.8" rx="4"/><rect x="1141.4" y="114.2" width="8" height="34.6" rx="4"/><rect x="1156.5" y="106.5" width="8" height="50.0" rx="4"/><rect x="1171.7" y="117.9" width="8" height="27.2" rx="4"/><rect x="1186.8" y="70.5" width="8" height="122.0" rx="4"/><rect x="1201.9" y="97.8" width="8" height="67.4" rx="4"/><rect x="1217.1" y="108.9" width="8" height="45.2" rx="4"/><rect x="1232.2" y="94.3" width="8" height="74.4" rx="4"/><rect x="1254.8" y="95.9" width="8" height="71.2" rx="4"/><rect x="1269.9" y="51.7" width="8" height="159.6" rx="4"/><rect x="1285.1" y="107.9" width="8" height="47.2" rx="4"/><rect x="1300.2" y="80.4" width="8" height="102.2" rx="4"/><rect x="1315.3" y="85.4" width="8" height="92.2" rx="4"/><rect x="1330.5" y="53.7" width="8" height="155.6" rx="4"/><rect x="1345.6" y="57.7" width="8" height="147.6" rx="4"/><rect x="1360.7" y="78.7" width="8" height="105.6" rx="4"/><rect x="1375.8" y="112.0" width="8" height="39.0" rx="4"/><rect x="1391.0" y="93.9" width="8" height="75.2" rx="4"/><rect x="1406.1" y="95.4" width="8" height="72.2" rx="4"/><rect x="1421.2" y="53.8" width="8" height="155.4" rx="4"/><rect x="1436.4" y="93.2" width="8" height="76.6" rx="4"/><rect x="1451.5" y="98.2" width="8" height="66.6" rx="4"/><rect x="1466.6" y="127.1" width="8" height="8.8" rx="4"/><rect x="1481.8" y="112.6" width="8" height="37.8" rx="4"/><rect x="1504.4" y="118.9" width="8" height="25.2" rx="4"/><rect x="1519.5" y="114.0" width="8" height="35.0" rx="4"/><rect x="1534.6" y="93.2" width="8" height="76.6" rx="4"/><rect x="1549.8" y="78.6" width="8" height="105.8" rx="4"/><rect x="1564.9" y="106.1" width="8" height="50.8" rx="4"/><rect x="1580.0" y="57.2" width="8" height="148.6" rx="4"/><rect x="1595.1" y="112.6" width="8" height="37.8" rx="4"/><rect x="1610.3" y="88.3" width="8" height="86.4" rx="4"/><rect x="1625.4" y="89.8" width="8" height="83.4" rx="4"/></g>
<rect x="0" y="0" width="1634" height="3" fill="#7859d4"/>
<rect x="0" y="259" width="1634" height="3" fill="#7859d4"/>
<rect x="0" y="0" width="3" height="262" fill="#7859d4"/>
<rect x="245.0" y="0" width="6" height="3" fill="#0b0a11"/><rect x="245.0" y="259" width="6" height="3" fill="#0b0a11"/>
<line x1="248.0" y1="0" x2="248.0" y2="262" stroke="#8c8a95" stroke-width="2.6" stroke-dasharray="8 8"/>
<rect x="494.6" y="0" width="6" height="3" fill="#0b0a11"/><rect x="494.6" y="259" width="6" height="3" fill="#0b0a11"/>
<line x1="497.6" y1="0" x2="497.6" y2="262" stroke="#8c8a95" stroke-width="2.6" stroke-dasharray="8 8"/>
<rect x="744.1" y="0" width="6" height="3" fill="#0b0a11"/><rect x="744.1" y="259" width="6" height="3" fill="#0b0a11"/>
<line x1="747.1" y1="0" x2="747.1" y2="262" stroke="#8c8a95" stroke-width="2.6" stroke-dasharray="8 8"/>
<rect x="993.7" y="0" width="6" height="3" fill="#0b0a11"/><rect x="993.7" y="259" width="6" height="3" fill="#0b0a11"/>
<line x1="996.7" y1="0" x2="996.7" y2="262" stroke="#8c8a95" stroke-width="2.6" stroke-dasharray="8 8"/>
<rect x="1243.2" y="0" width="6" height="3" fill="#0b0a11"/><rect x="1243.2" y="259" width="6" height="3" fill="#0b0a11"/>
<line x1="1246.2" y1="0" x2="1246.2" y2="262" stroke="#8c8a95" stroke-width="2.6" stroke-dasharray="8 8"/>
<rect x="1492.8" y="0" width="6" height="3" fill="#0b0a11"/><rect x="1492.8" y="259" width="6" height="3" fill="#0b0a11"/>
<line x1="1495.8" y1="0" x2="1495.8" y2="262" stroke="#8c8a95" stroke-width="2.6" stroke-dasharray="8 8"/>
<text x="124.3" y="32.5" text-anchor="middle" font-family="Liberation Sans" font-size="16" fill="#f4f2fa" stroke="#f4f2fa" stroke-width="0.7">1</text>
<path d="M120.6 227.5 L136.8 237.0 L120.6 246.5 Z" fill="#d9d4f5" stroke="#d9d4f5" stroke-width="4" stroke-linejoin="round"/>
<text x="373.9" y="32.5" text-anchor="middle" font-family="Liberation Sans" font-size="16" fill="#f4f2fa" stroke="#f4f2fa" stroke-width="0.7">2</text>
<path d="M370.2 227.5 L386.4 237.0 L370.2 246.5 Z" fill="#d9d4f5" stroke="#d9d4f5" stroke-width="4" stroke-linejoin="round"/>
<text x="623.4" y="32.5" text-anchor="middle" font-family="Liberation Sans" font-size="16" fill="#f4f2fa" stroke="#f4f2fa" stroke-width="0.7">3</text>
<path d="M619.7 227.5 L635.9 237.0 L619.7 246.5 Z" fill="#d9d4f5" stroke="#d9d4f5" stroke-width="4" stroke-linejoin="round"/>
<text x="873.0" y="32.5" text-anchor="middle" font-family="Liberation Sans" font-size="16" fill="#f4f2fa" stroke="#f4f2fa" stroke-width="0.7">4</text>
<path d="M869.3 227.5 L885.5 237.0 L869.3 246.5 Z" fill="#d9d4f5" stroke="#d9d4f5" stroke-width="4" stroke-linejoin="round"/>
<text x="1122.5" y="32.5" text-anchor="middle" font-family="Liberation Sans" font-size="16" fill="#f4f2fa" stroke="#f4f2fa" stroke-width="0.7">5</text>
<path d="M1118.8 227.5 L1135.0 237.0 L1118.8 246.5 Z" fill="#d9d4f5" stroke="#d9d4f5" stroke-width="4" stroke-linejoin="round"/>
<text x="1372.1" y="32.5" text-anchor="middle" font-family="Liberation Sans" font-size="16" fill="#f4f2fa" stroke="#f4f2fa" stroke-width="0.7">6</text>
<path d="M1368.4 227.5 L1384.6 237.0 L1368.4 246.5 Z" fill="#d9d4f5" stroke="#d9d4f5" stroke-width="4" stroke-linejoin="round"/>
<text x="1621.7" y="32.5" text-anchor="middle" font-family="Liberation Sans" font-size="16" fill="#f4f2fa" stroke="#f4f2fa" stroke-width="0.7">7</text>
<path d="M1618.0 227.5 L1634.2 237.0 L1618.0 246.5 Z" fill="#d9d4f5" stroke="#d9d4f5" stroke-width="4" stroke-linejoin="round"/>
</g></svg>
<!-- dropdown -->
<div class="abs" style="left:452px;top:301px;width:812px;height:181px;background:#1f1f1f;border-radius:4px;box-shadow:0 5px 5px -3px rgba(0,0,0,.35),0 8px 10px 1px rgba(0,0,0,.25),0 3px 14px 2px rgba(0,0,0,.22);"></div>
<div class="abs" style="left:452px;top:311px;width:812px;height:54px;background:#2f2f2f;"></div>
<div class="abs" style="left:452px;top:388px;width:1px;height:93px;background:rgba(120,89,212,0.55);"></div>
<div class="abs txt" style="left:474px;top:328px;font-size:19px;letter-spacing:0.25px;color:#fff;-webkit-text-stroke:0.3px #fff;">Large (32)</div>
<div class="abs txt" style="left:474px;top:382px;font-size:19px;letter-spacing:0.4px;color:#fff;-webkit-text-stroke:0.3px #fff;">Medium (16)</div>
<div class="abs txt" style="left:474px;top:435px;font-size:19px;color:#fff;-webkit-text-stroke:0.3px #fff;">Small (8)</div>


<!-- scrollbar h -->
<div class="abs" style="left:452px;top:809px;width:1634px;height:20px;background:#fafafa;"></div>
<div class="abs" style="left:455px;top:814px;width:1063px;height:11px;border-radius:6px;background:#c1c1c1;"></div>

<!-- bottom buttons -->
<div class="abs" style="left:1759px;top:830px;width:120px;height:47px;border-radius:8px;background:#2d2c3d;"></div>
<div class="abs txt" style="left:1783px;top:845px;font-size:20px;letter-spacing:2px;color:#f4f3f8;-webkit-text-stroke:0.5px #f4f3f8;">Cancel</div>
<div class="abs" style="left:1889px;top:830px;width:196px;height:47px;border-radius:8px;background:#212028;"></div>
<div class="abs txt" style="left:1912px;top:845px;font-size:20px;letter-spacing:1.9px;color:#5a5961;-webkit-text-stroke:0.5px #5a5961;">Save Changes</div>

</body></html>
